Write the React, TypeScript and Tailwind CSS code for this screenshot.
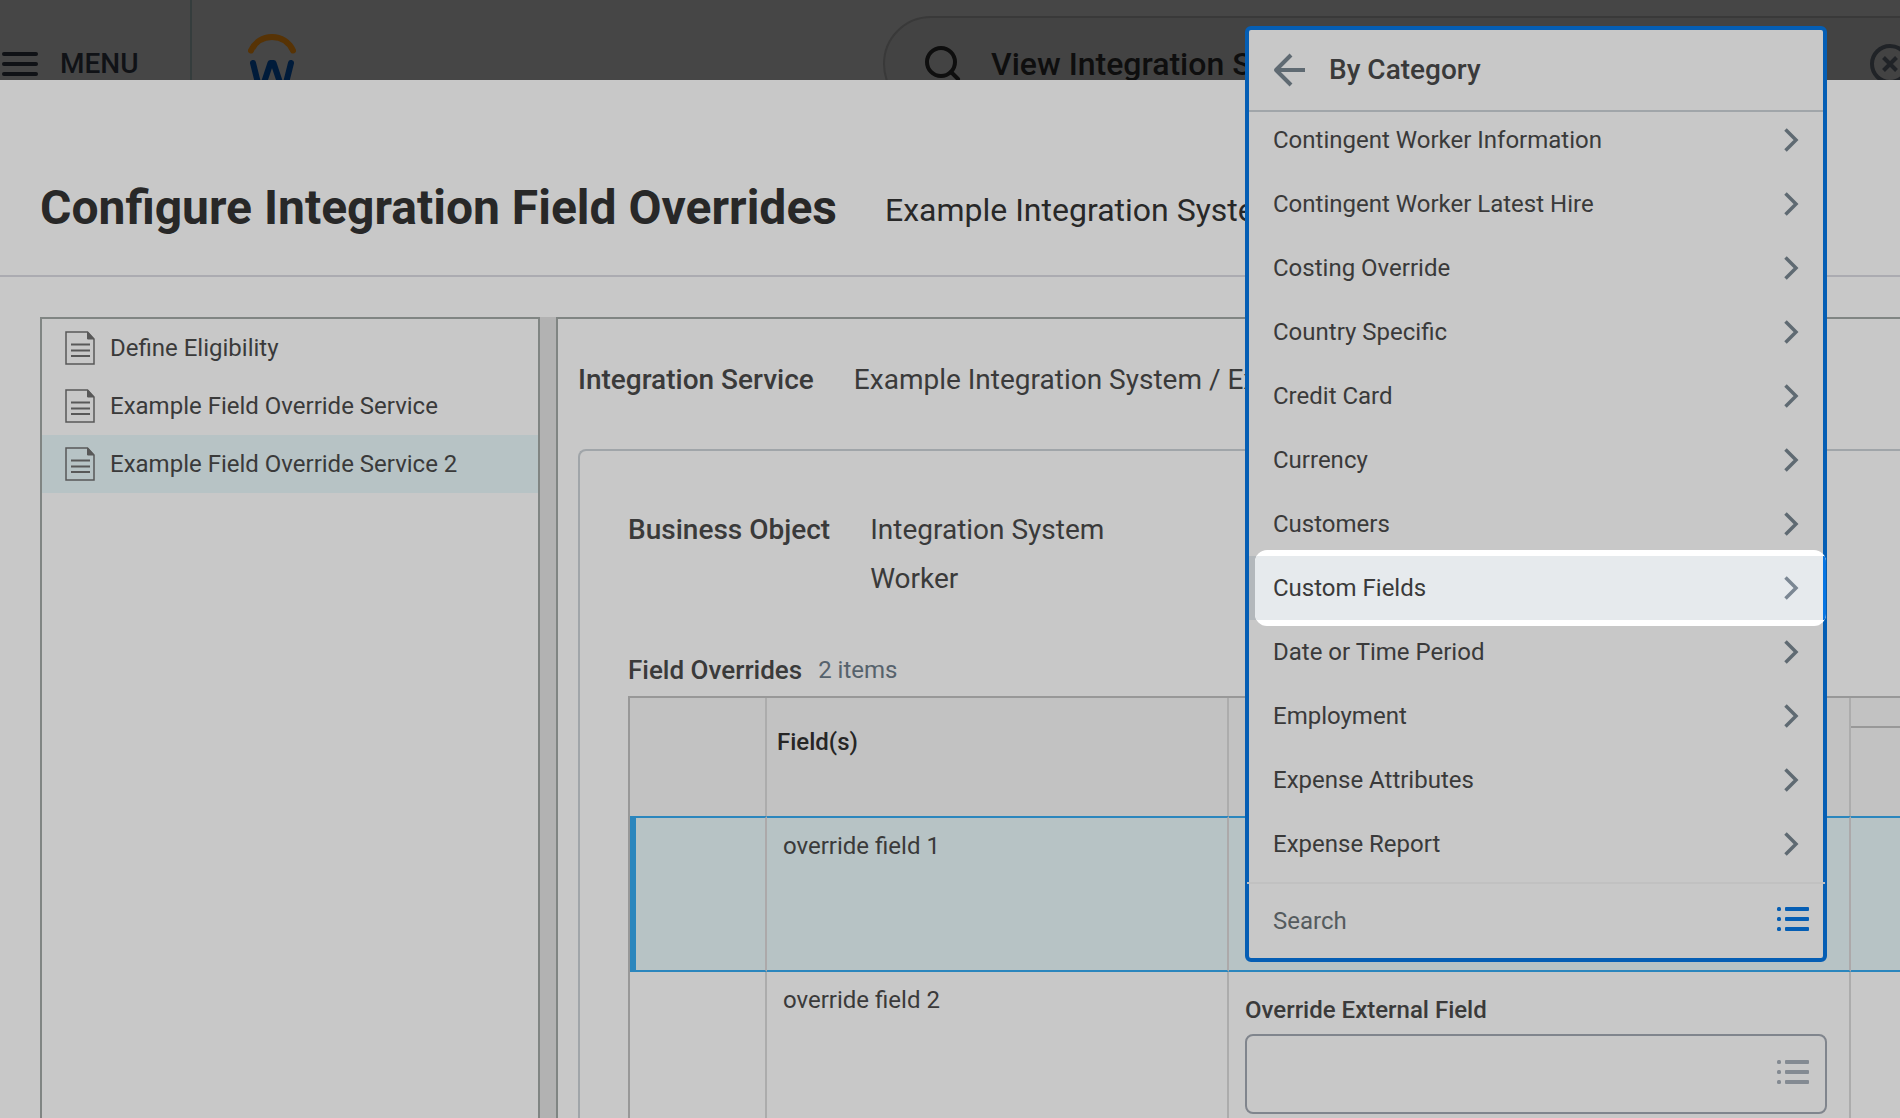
import React from "react";

const services = [
  { name: "Define Eligibility", active: false },
  { name: "Example Field Override Service", active: false },
  { name: "Example Field Override Service 2", active: true },
];

const categories = [
  "Contingent Worker Information",
  "Contingent Worker Latest Hire",
  "Costing Override",
  "Country Specific",
  "Credit Card",
  "Currency",
  "Customers",
  "Custom Fields",
  "Date or Time Period",
  "Employment",
  "Expense Attributes",
  "Expense Report",
];

function MenuIcon() {
  return (
    <svg width="36" height="24" viewBox="0 0 36 24" fill="#101216" aria-hidden="true">
      <rect width="36" height="4" rx="2" />
      <rect y="10" width="36" height="4" rx="2" />
      <rect y="20" width="36" height="4" rx="2" />
    </svg>
  );
}

function Logo() {
  return (
    <svg width="48" height="60" viewBox="0 0 48 60" fill="none" strokeLinecap="round" strokeLinejoin="round" aria-label="Home">
      <path d="M3 16.500C7 8 15 3 24 3s17 5 21 13.500" stroke="#573305" strokeWidth="6" />
      <path d="M5 29l7.500 30L22.500 29h3L35.500 59 43 29" stroke="#001b3a" strokeWidth="6" />
    </svg>
  );
}

function SearchIcon() {
  return (
    <svg width="36" height="36" viewBox="0 0 36 36" fill="none" stroke="#0e0e0e" strokeWidth="4" strokeLinecap="round" aria-hidden="true">
      <circle cx="16" cy="16" r="14" />
      <path d="M26 26l7 7" />
    </svg>
  );
}

function ClearIcon() {
  return (
    <svg width="40" height="40" viewBox="0 0 40 40" fill="none" stroke="#202327" strokeWidth="4" aria-hidden="true">
      <circle cx="20" cy="20" r="18" />
      <path d="M13.500 13.500l13 13M26.500 13.500l-13 13" />
    </svg>
  );
}

function DocumentIcon() {
  return (
    <svg width="30" height="34" viewBox="0 0 30 34" fill="none" stroke="#585858" aria-hidden="true">
      <path d="M1 1h21.500L29 8v25H1z" strokeWidth="1.500" />
      <path d="M22.500 1v7H29z" fill="#585858" />
      <path d="M6 13.500h19M6 19.500h19M6 25h19" strokeWidth="2" />
    </svg>
  );
}

function BackIcon() {
  return (
    <svg width="32" height="34" viewBox="0 0 32 34" fill="none" stroke="#5f6a72" strokeWidth="4" strokeLinejoin="round" aria-hidden="true">
      <path d="M18 2L3 17l15 15M3 17h29" />
    </svg>
  );
}

function ChevronIcon({ light }: { light: boolean }) {
  return (
    <svg width="15" height="24" viewBox="0 0 15 24" fill="none" stroke={light ? "#7b8793" : "#5f6a72"} strokeWidth="3.500" aria-hidden="true">
      <path d="M1.500 1.500L12 12 1.500 22.500" />
    </svg>
  );
}

function ListIcon({ color }: { color: string }) {
  return (
    <svg width="32" height="28" viewBox="0 0 32 28" fill={color} aria-hidden="true">
      {[0, 10, 20].map((y) => (
        <g key={y}>
          <rect y={y} width="4" height="4" rx="1.500" />
          <rect x="8" y={y} width="24" height="4" rx="1" />
        </g>
      ))}
    </svg>
  );
}

function TopBar() {
  return (
    <header className="flex h-20 shrink-0 items-start overflow-hidden bg-[#464646]">
      <button type="button" className="flex h-32 w-48 shrink-0 items-center gap-[22px] border-r-2 border-[#353d3d] pl-0.5 text-[28px] font-medium text-[#101216]">
        <MenuIcon />
        MENU
      </button>
      <a href="#home" className="mt-[34px] ml-14 shrink-0">
        <Logo />
      </a>
      <div className="mt-4 -mr-12 ml-[587px] flex h-24 flex-1 items-center rounded-full border-2 border-[#393939] bg-[#434343] pr-9 pl-10">
        <SearchIcon />
        <input
          aria-label="Search"
          defaultValue="View Integration System"
          className="ml-[30px] min-w-0 flex-1 bg-transparent text-[32px] font-medium text-[#0e0e0e] outline-none"
        />
        <button type="button" aria-label="Clear search" className="shrink-0">
          <ClearIcon />
        </button>
      </div>
    </header>
  );
}

function CategoryPopup() {
  return (
    <div className="absolute inset-x-0 -bottom-0.5 z-10 rounded-md border-4 border-[#055eb4] bg-[#c8c8c8]">
      <div className="flex h-[82px] items-center gap-6 border-b-2 border-[#a0a5a9] pl-6">
        <button type="button" aria-label="Back">
          <BackIcon />
        </button>
        <h2 className="text-[28px] leading-8 font-medium text-[#3a3a3a]">By Category</h2>
      </div>
      <div className="flow-root h-[770px]">
        <ul className="-mt-1">
          {categories.map((name) => {
            const active = name === "Custom Fields";
            return (
              <li key={name} className={active ? "relative bg-[#b3b8bc]" : ""}>
                {active && (
                  <div className="absolute -inset-y-1.5 -right-[3px] left-1.5 overflow-hidden rounded-xl bg-white py-1.5">
                    <div className="h-full border-r-3 border-[#0875e1] bg-[#e6eaed]" />
                  </div>
                )}
                <button type="button" className="relative flex h-16 w-full items-center justify-between px-6 text-left text-2xl text-[#3a3a3a]">
                  {name}
                  <ChevronIcon light={active} />
                </button>
              </li>
            );
          })}
        </ul>
      </div>
      <div className="-mx-0.5 flex h-[76px] items-center border-t-2 border-[#c1c1c1] pr-4 pl-[26px]">
        <input
          aria-label="Search categories"
          placeholder="Search"
          className="min-w-0 flex-1 bg-transparent text-2xl outline-none placeholder:text-[#555b5e]"
        />
        <ListIcon color="#055eb4" />
      </div>
    </div>
  );
}

function OverrideField({ id, open }: { id: string; open: boolean }) {
  return (
    <div className="flex flex-col gap-2.5 pt-6 pr-[22px] pb-2.5 pl-4">
      {open ? (
        <div className="h-7" />
      ) : (
        <label htmlFor={id} className="text-2xl leading-7 font-medium text-[#3a3a3a]">
          Override External Field
        </label>
      )}
      <div className="relative">
        <div className="flex h-20 items-center rounded-lg border-2 border-[#80858d] pr-4 pl-6">
          <input
            id={id}
            aria-label={open ? "Override External Field" : undefined}
            className="min-w-0 flex-1 bg-transparent text-2xl outline-none"
          />
          <ListIcon color="#838a92" />
        </div>
        {open && <CategoryPopup />}
      </div>
    </div>
  );
}

function OverridesTable() {
  return (
    <table className="w-full table-fixed border-separate border-spacing-0 border-t-2 border-l-2 border-[#989898] text-left text-2xl">
      <colgroup>
        <col className="w-[137px]" />
        <col className="w-[462px]" />
        <col className="w-[622px]" />
        <col />
      </colgroup>
      <thead className="bg-[#c2c2c2]">
        <tr>
          <th rowSpan={2} aria-label="Row actions" className="border-r-2 border-[#acacac]" />
          <th rowSpan={2} className="border-r-2 border-[#acacac] px-2.5 pt-[30px] align-top leading-7 font-medium text-[#262626]">
            Field(s)
          </th>
          <th rowSpan={2} aria-label="Override" className="border-r-2 border-[#acacac]" />
          <th aria-label="Options" className="h-[30px] border-b-2 border-[#989898]" />
        </tr>
        <tr>
          <th aria-label="Option" className="h-[88px]" />
        </tr>
      </thead>
      <tbody className="align-top text-[#3a3a3a]">
        <tr className="bg-[#b7c3c5]">
          <td className="border-y-2 border-r-2 border-l-6 border-y-[#2b86bd] border-r-[#aca9aa] border-l-[#2b86bd]" />
          <td className="border-y-2 border-r-2 border-y-[#2b86bd] border-r-[#aca9aa] px-4 pt-3.5 leading-7">override field 1</td>
          <td className="border-y-2 border-r-2 border-y-[#2b86bd] border-r-[#aca9aa] p-0">
            <OverrideField id="override-1" open />
          </td>
          <td className="border-y-2 border-[#2b86bd]" />
        </tr>
        <tr>
          <td className="border-r-2 border-[#acacac]" />
          <td className="border-r-2 border-[#acacac] px-4 pt-3.5 leading-7">override field 2</td>
          <td className="border-r-2 border-[#acacac] p-0">
            <OverrideField id="override-2" open={false} />
          </td>
          <td />
        </tr>
      </tbody>
    </table>
  );
}

export default function App() {
  return (
    <div className="flex h-screen flex-col overflow-hidden bg-[#c8c8c8] font-[Roboto,sans-serif] text-[#3a3a3a]">
      <TopBar />
      <div className="flex shrink-0 items-center gap-12 border-b-2 border-[#ababb1] px-10 pt-[100px] pb-[39px] whitespace-nowrap text-[#282828]">
        <h1 className="text-5xl leading-14 font-bold">Configure Integration Field Overrides</h1>
        <p className="pt-1 text-[32px] leading-10">Example Integration System</p>
      </div>
      <div className="flex min-h-0 flex-1 pt-10 pl-10">
        <nav className="w-[500px] shrink-0 border-2 border-b-0 border-[#808583]">
          {services.map((s) => (
            <a
              key={s.name}
              href="#service"
              className={
                s.active
                  ? "flex h-[58px] items-center gap-[15px] bg-[#b7c3c5] pl-[23px] text-2xl"
                  : "flex h-[58px] items-center gap-[15px] pl-[23px] text-2xl"
              }
            >
              <DocumentIcon />
              {s.name}
            </a>
          ))}
        </nav>
        <div className="w-4 shrink-0 bg-[#b2b2b2]" />
        <main className="min-w-0 flex-1 border-t-2 border-l-2 border-[#808583] pt-[45px] pl-5">
          <dl className="flex gap-10 text-[28px] leading-8 whitespace-nowrap">
            <dt className="font-medium">Integration Service</dt>
            <dd>Example Integration System / Example Field Override Service 2</dd>
          </dl>
          <section className="mt-[53px] rounded-tl-lg border-t-2 border-l-2 border-[#a0a5a9] pt-[63px] pl-12">
            <dl className="flex gap-10 text-[28px] leading-8">
              <dt className="font-medium">Business Object</dt>
              <dd className="flex flex-col gap-[17px]">
                <span>Integration System</span>
                <span>Worker</span>
              </dd>
            </dl>
            <div className="mt-[59px] mb-2.5 flex items-center gap-4 leading-8">
              <h2 className="text-[26px] font-medium">Field Overrides</h2>
              <span className="text-2xl text-[#56626c]">2 items</span>
            </div>
            <OverridesTable />
          </section>
        </main>
      </div>
    </div>
  );
}
